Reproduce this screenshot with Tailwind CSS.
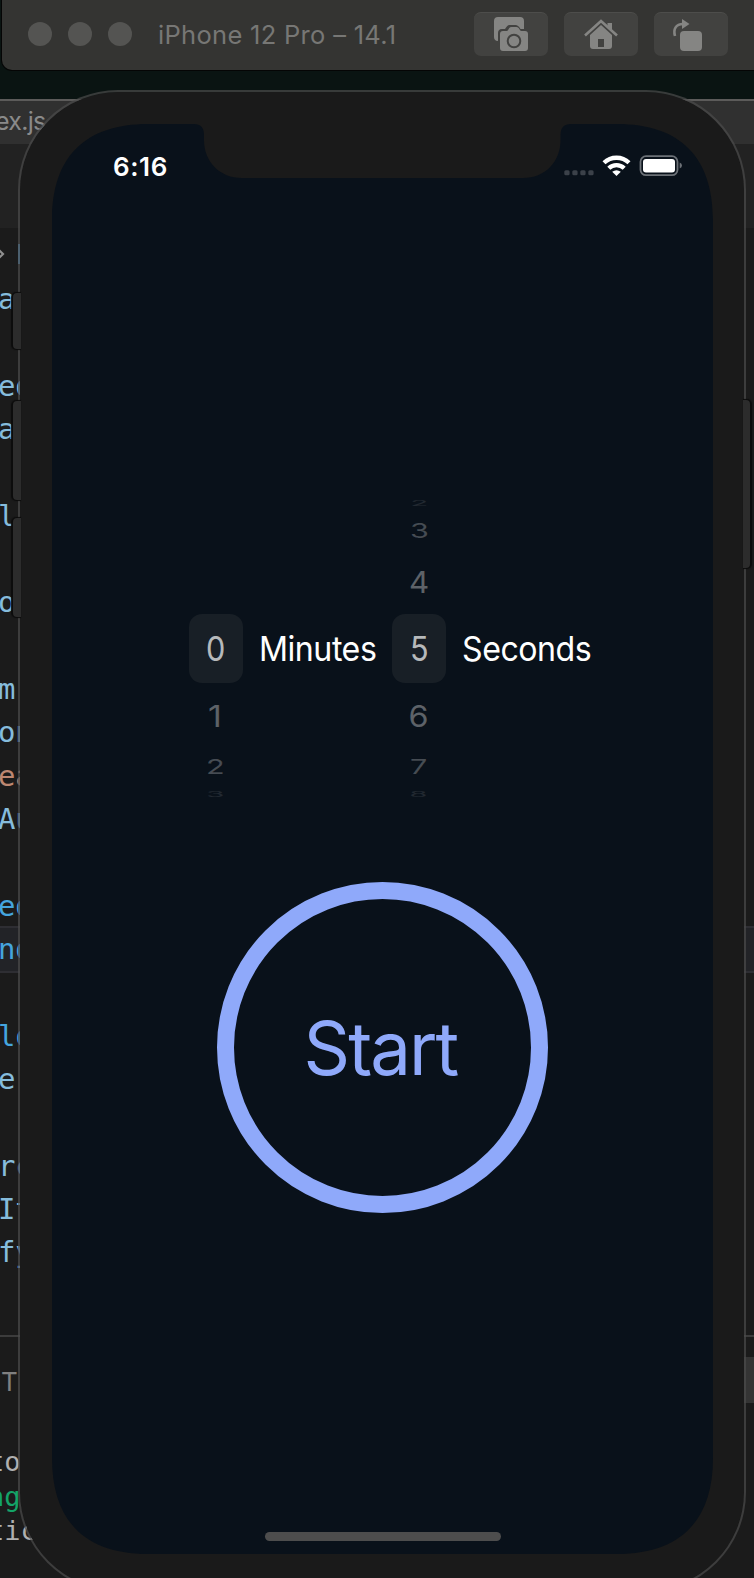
<!DOCTYPE html>
<html lang="en">
<head>
<meta charset="utf-8">
<title>iPhone 12 Pro – 14.1</title>
<script src="https://cdn.jsdelivr.net/npm/@tailwindcss/browser@4"></script>
</head>
<body class="bg-[#0a1412]">
<div class="relative w-[754px] h-[1578px] overflow-hidden bg-[#0a1412] font-['Inter','Liberation_Sans',sans-serif]">

  <!-- Editor window behind the simulator -->
  <div class="absolute left-0 top-[99px] w-[754px] h-[1479px] bg-[#1b1b1b] border-t-2 border-[#5c5b5a] flex flex-col overflow-hidden">
    <div class="h-[43px] shrink-0 bg-[#303030] text-[#8a8a8a] text-[25px] leading-[41px] whitespace-nowrap"><span class="ml-[-5px] tracking-[-0.7px]">ex.js</span></div>
    <div class="h-[84px] shrink-0 bg-[#222222]"></div>
    <div class="h-[48px] shrink-0 flex items-center gap-[12px] pt-1">
      <svg class="w-[6px] h-[16px] shrink-0" viewBox="0 0 6 16" fill="none" stroke="#8f8f8f" stroke-width="2.2"><path d="M-3 2l6 6-6 6"/></svg>
      <div class="w-1 h-5 bg-[#4f8fc3]"></div>
    </div>
    <div class="h-[1010px] shrink-0 font-['DejaVu_Sans_Mono',monospace] text-[29px] leading-[43.33px] tracking-[-0.3px] text-[#86bcdc]">
      <div class="ml-[-2px] pt-[2px] whitespace-pre"><div>a</div><div> </div><div>ed</div><div>a</div><div> </div><div>l'</div><div> </div><div>o</div><div> </div><div>m,</div><div>on</div><div class="text-[#bd8771]">ea</div><div>Au</div><div> </div><div class="text-[#45a5de]">ed</div><div class="text-[#45a5de] bg-[#222327] outline-2 outline-[#2e2e33]">nd</div><div> </div><div class="text-[#45a5de]">lo</div><div>e</div><div class="text-[#7f8c74]"> :</div><div>rc</div><div>It</div><div>fy</div></div>
    </div>
    <div class="mt-[49px] border-t-2 border-[#3c3c3c] flex justify-between h-[100px] shrink-0 text-[#808080]">
      <span class="pl-[1px] pt-[28px] text-[26px] leading-[34px]">T</span>
      <div class="mt-[20px] w-[10px] h-[46px] bg-[#343434]"></div>
    </div>
    <div class="mt-[10px] ml-[-12px] font-['DejaVu_Sans_Mono',monospace] text-[27px] leading-[34.5px] text-[#b0b0b0] whitespace-pre"><div>to</div><div class="text-[#14a468]">ng</div><div>tic</div></div>
  </div>

  <!-- Hardware buttons -->
  <div class="absolute z-10 left-[13px] top-[293px] w-[8px] h-[56px] rounded-l-[4px] bg-[#2c2c2c] shadow-[-1px_0_1px_1px_#0c0c0c]"></div>
  <div class="absolute z-10 left-[13px] top-[401px] w-[8px] h-[99px] rounded-l-[4px] bg-[#2c2c2c] shadow-[-1px_0_1px_1px_#0c0c0c]"></div>
  <div class="absolute z-10 left-[13px] top-[518px] w-[8px] h-[99px] rounded-l-[4px] bg-[#2c2c2c] shadow-[-1px_0_1px_1px_#0c0c0c]"></div>
  <div class="absolute z-10 left-[743px] top-[400px] w-[7px] h-[168px] rounded-r-[4px] bg-[#2c2c2c] shadow-[1px_0_1px_1px_#0c0c0c]"></div>

  <!-- Phone -->
  <div class="absolute left-[18px] top-[90px] w-[728px] h-[1502px] rounded-[100px] border-2 border-[#4c4c4c]/70 bg-clip-padding bg-[#1a1a1a] pl-[32px] pt-[32px]">
    <div class="relative w-[661px] h-[1430px]">
      <svg class="absolute inset-0 w-[661px] h-[1430px]" viewBox="0 0 661 1430" fill="#09111a"><path d="M0 96C0 33 33 0 96 0H142Q152 0 152 11V16C152 38 168 54 190 54H471C493 54 508.500 38 508.500 16V11Q508.500 0 519 0H565C628 0 661 33 661 96V1334C661 1397 628 1430 565 1430H96C33 1430 0 1397 0 1334Z"/></svg>
      <div class="relative flex flex-col h-full">
        <div class="h-[84px] flex items-center justify-between pl-[61px] pr-[31px] text-white">
          <span class="text-[26px] font-semibold tracking-[0.6px]">6:16</span>
          <svg class="w-[119px] h-[24px]" viewBox="563 154 119 24" fill="#fff">
            <g fill="#3b4149"><rect x="564.300" y="170.200" width="5.300" height="5" rx="1.500"/><rect x="572.300" y="170.200" width="5.300" height="5" rx="1.500"/><rect x="580.300" y="170.200" width="5.300" height="5" rx="1.500"/><rect x="588.300" y="170.200" width="5.300" height="5" rx="1.500"/></g>
            <g fill="none" stroke="#fff" stroke-width="4.300"><path d="M604 162.800a18 18 0 0 1 25 0"/><path d="M608.800 168.300a11 11 0 0 1 15.400 0"/></g>
            <path d="M616.500 175.900l-4.300-4.100q4.300-3 8.600 0z"/>
            <rect x="640.500" y="156.200" width="37" height="19" rx="5.500" fill="none" stroke="#6c7177" stroke-width="1.800"/>
            <rect x="643" y="159" width="32" height="13.600" rx="3"/>
            <path d="M679.700 162.500q2.300.8 2.300 3t-2.300 3z" fill="#6c7177"/>
          </svg>
        </div>

        <div class="mt-[286px] pl-[137px] grid grid-cols-[54px_149px_54px_auto] items-center text-[34px] leading-none text-white">
          <div class="text-center flex flex-col">
            <div class="h-[120px]"></div>
            <div class="h-[69px] rounded-[13px] bg-[#181f26] text-white/70 flex items-center justify-center"><span class="scale-x-90 mr-[1px]">0</span></div>
            <div class="h-[65px] flex items-center justify-center text-white/35"><span class="scale-y-[.88] mr-[2px]">1</span></div>
            <div class="h-[37px] flex items-center justify-center text-white/25"><span class="scale-x-90 scale-y-[.6] mr-[1px]">2</span></div>
            <div class="h-[18px] flex items-center justify-center text-white/10"><span class="scale-x-[.85] scale-y-[.21]">3</span></div>
          </div>
          <div class="pl-4"><span class="inline-block origin-left scale-x-[.945] tracking-[-0.5px]">Minutes</span></div>
          <div class="text-center flex flex-col">
            <div class="h-[18px] flex items-center justify-center text-white/10"><span class="scale-x-[.85] scale-y-[.21]">2</span></div>
            <div class="h-[37px] flex items-center justify-center text-white/25"><span class="scale-x-90 scale-y-[.6] ml-[1px]">3</span></div>
            <div class="h-[65px] flex items-center justify-center text-white/35"><span class="scale-x-[.92] scale-y-[.88]">4</span></div>
            <div class="h-[69px] rounded-[13px] bg-[#181f26] text-white/70 flex items-center justify-center"><span class="scale-x-90 ml-[1px]">5</span></div>
            <div class="h-[65px] flex items-center justify-center text-white/35"><span class="scale-x-95 scale-y-[.88]">6</span></div>
            <div class="h-[37px] flex items-center justify-center text-white/25"><span class="scale-x-90 scale-y-[.6]">7</span></div>
            <div class="h-[18px] flex items-center justify-center text-white/10"><span class="scale-x-[.85] scale-y-[.21]">8</span></div>
          </div>
          <div class="pl-4"><span class="inline-block origin-left scale-x-[.945] tracking-[-0.5px]">Seconds</span></div>
        </div>

        <div class="mt-[79px] ml-[165px] w-[331px] h-[331px] rounded-full border-[17px] border-[#8fa9fa] flex items-center justify-center text-[74px] leading-none text-[#8fa9fa]"><span class="inline-block mr-[4px] scale-x-[.98] tracking-[-2px]">Start</span></div>

        <div class="mt-auto mb-[13px] mx-auto w-[236px] h-[9px] rounded-full bg-[#4d4d4d]"></div>
      </div>
    </div>
  </div>

  <!-- Simulator title bar -->
  <div class="absolute left-[2px] top-0 w-[760px] h-[70px] bg-[#343432] rounded-bl-[10px] shadow-[0_0_0_1px_#050505] flex items-center pl-[26px]">
    <div class="flex gap-4 mb-[2px]"><i class="size-6 rounded-full bg-[#545452]"></i><i class="size-6 rounded-full bg-[#545452]"></i><i class="size-6 rounded-full bg-[#545452]"></i></div>
    <span class="w-[316px] ml-[26px] text-[25.500px] tracking-[0.3px] text-[#777775] whitespace-nowrap">iPhone 12 Pro – 14.1</span>
    <div class="flex gap-4 mb-[2px]">
      <div class="w-[74px] h-[44px] rounded-[7px] bg-[#424240] border-t border-[#4d4d4b]">
        <svg class="w-[74px] h-[43px]" viewBox="0 1 74 43" fill="#858583"><path d="M24 5h22a4 4 0 0 1 4 4v8h-3.500c-2-3-3-4-5-4h-6c-2 0-3 2-4.500 4H28c-3 0-4 2-4 4v8c-3 0-4-2-4-4V9a4 4 0 0 1 4-4z"/><path d="M29 19h3.500c2 0 2-4 5-4h5c3 0 3 4 5 4H51a3 3 0 0 1 3 3v14a3 3 0 0 1-3 3H29a3 3 0 0 1-3-3V22a3 3 0 0 1 3-3z"/><circle cx="40" cy="29" r="6.300" fill="none" stroke="#424240" stroke-width="2"/></svg>
      </div>
      <div class="w-[74px] h-[44px] rounded-[7px] bg-[#424240] border-t border-[#4d4d4b]">
        <svg class="w-[74px] h-[43px]" viewBox="0 1 74 43" fill="#858583"><path d="M21 23.500L37 9l16 14.500" fill="none" stroke="#858583" stroke-width="2.600"/><path d="M43.500 11h4.500v8l-4.500-4z"/><path d="M26 23l11-10 11 10v11a3 3 0 0 1-3 3h-5V27h-6v10h-5a3 3 0 0 1-3-3z"/><path d="M34 35h6v2h-6z"/></svg>
      </div>
      <div class="w-[74px] h-[44px] rounded-[7px] bg-[#424240] border-t border-[#4d4d4b]">
        <svg class="w-[74px] h-[43px]" viewBox="0 1 74 43" fill="#858583"><rect x="26" y="19" width="22" height="20" rx="4"/><path d="M21 24c-2-7 1-12 8-12" fill="none" stroke="#858583" stroke-width="2.600"/><path d="M28 7l7.500 5L28 17z"/></svg>
      </div>
    </div>
  </div>
</div>
</body>
</html>
